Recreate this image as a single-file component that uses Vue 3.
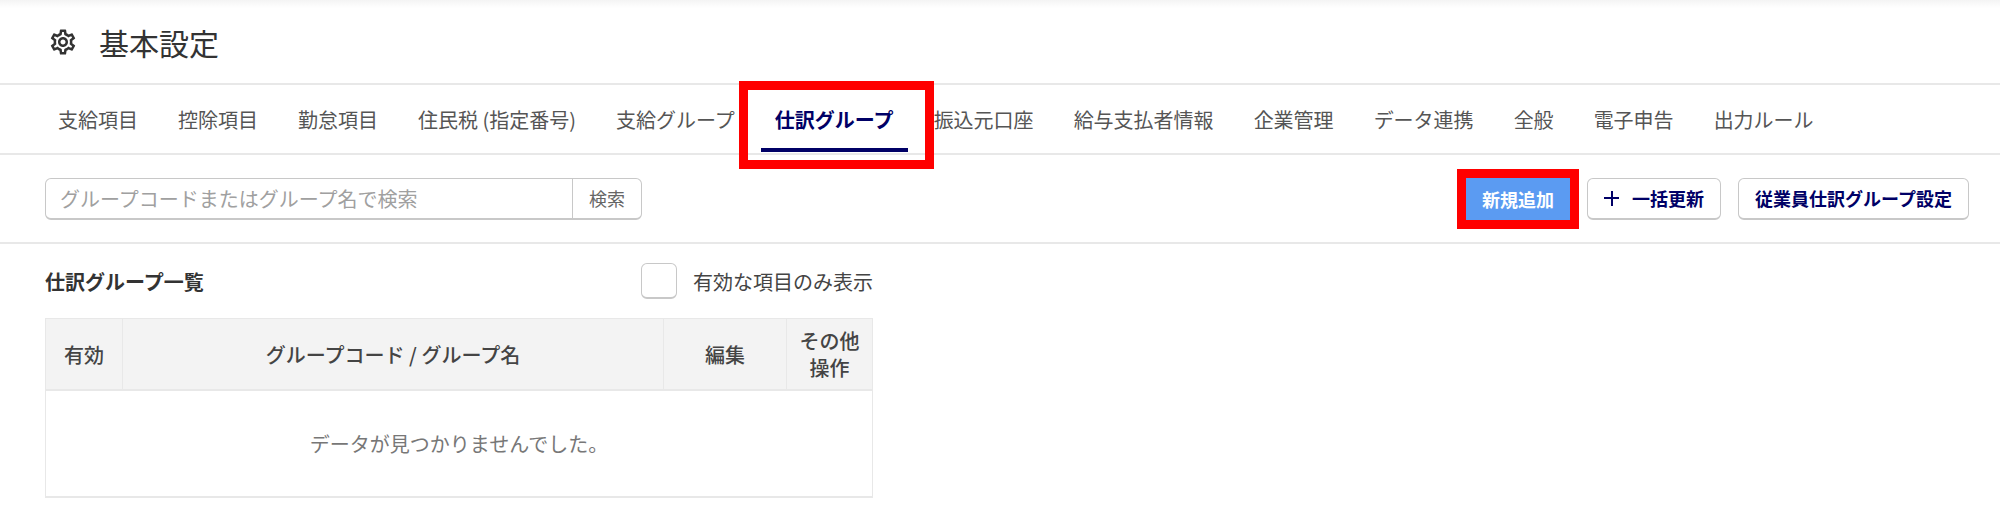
<template>
  <div class="page">
    <header class="page-head">
      <svg class="gear" viewBox="0 0 24 24" aria-hidden="true">
        <path d="M19.43 12.98c.04-.32.07-.64.07-.98 0-.34-.03-.66-.07-.98l2.11-1.65c.19-.15.24-.42.12-.64l-2-3.46c-.09-.16-.26-.25-.44-.25-.06 0-.12.01-.17.03l-2.49 1c-.52-.4-1.08-.73-1.69-.98l-.38-2.65C14.46 2.18 14.25 2 14 2h-4c-.25 0-.46.18-.49.42l-.38 2.65c-.61.25-1.17.59-1.69.98l-2.49-1c-.06-.02-.12-.03-.18-.03-.17 0-.34.09-.43.25l-2 3.46c-.13.22-.07.49.12.64l2.11 1.65c-.04.32-.07.65-.07.98 0 .33.03.66.07.98l-2.11 1.65c-.19.15-.24.42-.12.64l2 3.46c.09.16.26.25.44.25.06 0 .12-.01.17-.03l2.49-1c.52.4 1.08.73 1.69.98l.38 2.65c.03.24.24.42.49.42h4c.25 0 .46-.18.49-.42l.38-2.65c.61-.25 1.17-.59 1.69-.98l2.49 1c.06.02.12.03.18.03.17 0 .34-.09.43-.25l2-3.46c.12-.22.07-.49-.12-.64l-2.11-1.65zm-1.98-1.71c.04.31.05.52.05.73 0 .21-.02.43-.05.73l-.14 1.13.89.7 1.08.84-.7 1.21-1.27-.51-1.04-.42-.9.68c-.43.32-.84.56-1.25.73l-1.06.43-.16 1.13-.2 1.35h-1.4l-.19-1.35-.16-1.13-1.06-.43c-.43-.18-.83-.41-1.23-.71l-.91-.7-1.06.43-1.27.51-.7-1.21 1.08-.84.89-.7-.14-1.13c-.03-.31-.05-.54-.05-.74s.02-.43.05-.73l.14-1.13-.89-.7-1.08-.84.7-1.21 1.27.51 1.04.42.9-.68c.43-.32.84-.56 1.25-.73l1.06-.43.16-1.13.2-1.35h1.39l.19 1.35.16 1.13 1.06.43c.43.18.83.41 1.23.71l.91.7 1.06-.43 1.27-.51.7 1.21-1.07.85-.89.7.14 1.13zM12 8c-2.21 0-4 1.79-4 4s1.79 4 4 4 4-1.79 4-4-1.79-4-4-4zm0 6c-1.1 0-2-.9-2-2s.9-2 2-2 2 .9 2 2-.9 2-2 2z" />
      </svg>
      <h1 class="title">基本設定</h1>
    </header>

    <nav class="tabs" aria-label="基本設定">
      <a
        v-for="tab in tabs"
        :key="tab"
        :class="['tab', { active: tab === activeTab }]"
      >
        {{ tab }}
        <span v-if="tab === activeTab" class="tab-mark"></span>
      </a>
    </nav>

    <section class="toolbar">
      <div class="search">
        <input class="search-input" type="text" placeholder="グループコードまたはグループ名で検索" />
        <button class="search-btn" type="button">検索</button>
      </div>
      <div class="actions">
        <button class="btn btn-primary" type="button">
          新規追加
          <span class="btn-mark"></span>
        </button>
        <button class="btn" type="button"><span class="plus"></span>一括更新</button>
        <button class="btn" type="button">従業員仕訳グループ設定</button>
      </div>
    </section>

    <section class="list">
      <div class="list-head">
        <h2 class="list-title">仕訳グループ一覧</h2>
        <label class="only-active">
          <span class="check"></span>
          有効な項目のみ表示
        </label>
      </div>
      <table class="grid">
        <thead>
          <tr>
            <th class="col-active">有効</th>
            <th>グループコード / グループ名</th>
            <th class="col-edit">編集</th>
            <th class="col-other">その他<br />操作</th>
          </tr>
        </thead>
        <tbody>
          <tr>
            <td class="empty" colspan="4">データが見つかりませんでした。</td>
          </tr>
        </tbody>
      </table>
    </section>
  </div>
</template>

<script setup>
const tabs = [
  '支給項目',
  '控除項目',
  '勤怠項目',
  '住民税 (指定番号)',
  '支給グループ',
  '仕訳グループ',
  '振込元口座',
  '給与支払者情報',
  '企業管理',
  'データ連携',
  '全般',
  '電子申告',
  '出力ルール',
];
const activeTab = '仕訳グループ';
</script>

<style>
html,
body {
  background: #fff;
}
</style>

<style scoped>
.page {
  height: 527px;
  overflow: hidden;
  background: linear-gradient(#f4f4f4, #fff 8px);
  font-family: "Noto Sans CJK JP", "Noto Sans", sans-serif;
  color: #444;
}
.page-head {
  height: 83px;
  padding: 0 0 4px 48px;
  box-sizing: border-box;
  display: flex;
  align-items: center;
  gap: 21px;
  border-bottom: 2px solid #e8e8e8;
  box-sizing: content-box;
  padding-bottom: 0;
}
.gear {
  width: 30px;
  height: 30px;
  fill: #333;
}
.title {
  margin: 0;
  font-size: 30px;
  font-weight: 400;
  color: #333;
}
.tabs {
  height: 68px;
  padding-left: 38px;
  display: flex;
  border-bottom: 2px solid #e8e8e8;
}
.tab {
  position: relative;
  padding: 0 20px;
  display: flex;
  align-items: center;
  font-size: 20px;
  color: #555;
  white-space: nowrap;
}
.tab.active {
  font-weight: 700;
  color: #000066;
}
.tab.active::after {
  content: "";
  position: absolute;
  left: 6px;
  right: 6px;
  bottom: 1px;
  height: 4px;
  background: #000066;
}
.tab-mark {
  position: absolute;
  left: -16px;
  right: -20px;
  top: -4px;
  bottom: -16px;
  border: 9px solid #ff0000;
}
.toolbar {
  height: 87px;
  padding: 0 31px 0 45px;
  display: flex;
  align-items: center;
  justify-content: space-between;
  border-bottom: 2px solid #e8e8e8;
}
.search {
  display: flex;
  width: 597px;
  height: 42px;
  box-sizing: border-box;
  border: 1px solid #c8c8c8;
  border-bottom-width: 2px;
  border-radius: 6px;
}
.search-input {
  flex: 1;
  min-width: 0;
  border: 0;
  outline: 0;
  padding: 0 14px;
  background: transparent;
  font: inherit;
  font-size: 20px;
  color: #444;
}
.search-input::placeholder {
  color: #a0a0a0;
}
.search-btn {
  width: 69px;
  border: 0;
  border-left: 1px solid #c8c8c8;
  background: transparent;
  font: inherit;
  font-size: 18px;
  color: #666;
}
.actions {
  display: flex;
  gap: 17px;
}
.btn {
  position: relative;
  height: 42px;
  padding: 0 16px;
  display: flex;
  align-items: center;
  box-sizing: border-box;
  border: 1px solid #c8c8c8;
  border-bottom-width: 2px;
  border-radius: 6px;
  background: #fff;
  font: inherit;
  font-size: 18px;
  font-weight: 700;
  color: #000066;
  white-space: nowrap;
}
.btn-primary {
  width: 104px;
  justify-content: center;
  padding: 0;
  border: 0;
  border-radius: 0;
  background: #5b9bf2;
  color: #fff;
}
.btn-mark {
  position: absolute;
  inset: -9px;
  border: 9px solid #ff0000;
}
.plus {
  position: relative;
  width: 15px;
  height: 15px;
  margin-right: 13px;
  background:
    linear-gradient(#000066, #000066) center / 100% 2px no-repeat,
    linear-gradient(#000066, #000066) center / 2px 100% no-repeat;
}
.list {
  width: 828px;
  margin-left: 45px;
}
.list-head {
  height: 74px;
  display: flex;
  align-items: center;
  justify-content: space-between;
  padding-bottom: 0;
}
.list-title {
  margin: 0;
  font-size: 20px;
  font-weight: 700;
  color: #333;
}
.only-active {
  display: flex;
  align-items: center;
  gap: 16px;
  font-size: 20px;
  color: #444;
}
.check {
  width: 36px;
  height: 36px;
  box-sizing: border-box;
  border: 1px solid #c8c8c8;
  border-bottom-width: 2px;
  border-radius: 6px;
  background: #fff;
}
.grid {
  width: 100%;
  border-collapse: collapse;
  table-layout: fixed;
  border: 1px solid #e8e8e8;
  border-bottom-width: 2px;
}
.grid th {
  height: 70px;
  padding: 0;
  background: #f3f3f3;
  border-left: 1px solid #e8e8e8;
  border-bottom: 2px solid #e8e8e8;
  font-size: 20px;
  line-height: 27px;
  font-weight: 500;
  color: #444;
}
.col-active {
  width: 76px;
}
.col-edit {
  width: 122px;
}
.col-other {
  width: 85px;
}
.empty {
  height: 105px;
  padding: 0;
  text-align: center;
  font-size: 20px;
  color: #777;
}
</style>
